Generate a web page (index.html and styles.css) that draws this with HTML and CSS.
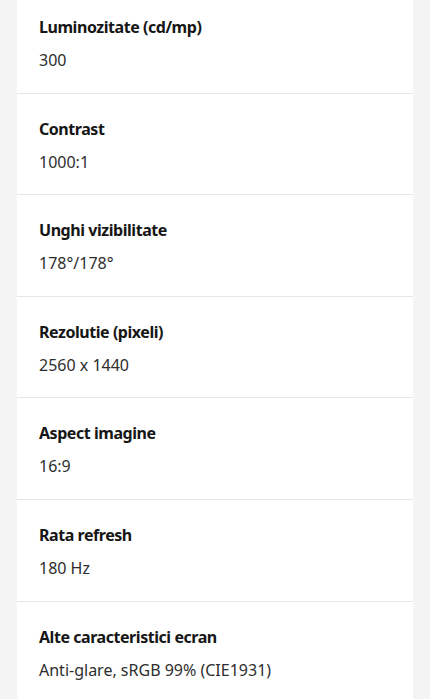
FILE: index.html
```html
<!DOCTYPE html>
<html lang="ro">
<head>
<meta charset="utf-8">
<link rel="stylesheet" href="styles.css">
</head>
<body>
<div class="page">
  <dl class="specs">
    <div class="row"><dt>Luminozitate (cd/mp)</dt><dd>300</dd></div>
    <div class="row"><dt>Contrast</dt><dd>1000:1</dd></div>
    <div class="row"><dt>Unghi vizibilitate</dt><dd>178°/178°</dd></div>
    <div class="row"><dt>Rezolutie (pixeli)</dt><dd>2560 x 1440</dd></div>
    <div class="row"><dt>Aspect imagine</dt><dd>16:9</dd></div>
    <div class="row"><dt>Rata refresh</dt><dd>180 Hz</dd></div>
    <div class="row"><dt>Alte caracteristici ecran</dt><dd>Anti-glare, sRGB 99% (CIE1931)</dd></div>
  </dl>
</div>
</body>
</html>
```
FILE: styles.css
```css
html, body {
  margin: 0;
  padding: 0;
  background: #f4f4f4;
  overflow: hidden;
}
.page {
  padding: 0 17px;
}
.specs {
  margin: -8px 0 0 0;
  padding: 0;
  background: #ffffff;
  font-family: "Noto Sans", "Open Sans", sans-serif;
}
.row {
  display: flex;
  flex-direction: column;
  gap: 9px;
  padding: 23px 22px 20.6px;
  border-bottom: 1px solid #e6e6e6;
}
dt {
  margin: 0;
  font-size: 16px;
  line-height: 24px;
  font-weight: 700;
  letter-spacing: -0.45px;
  color: #161616;
}
dd {
  margin: 0;
  font-size: 16px;
  line-height: 24px;
  color: #2e2e2e;
}
```
